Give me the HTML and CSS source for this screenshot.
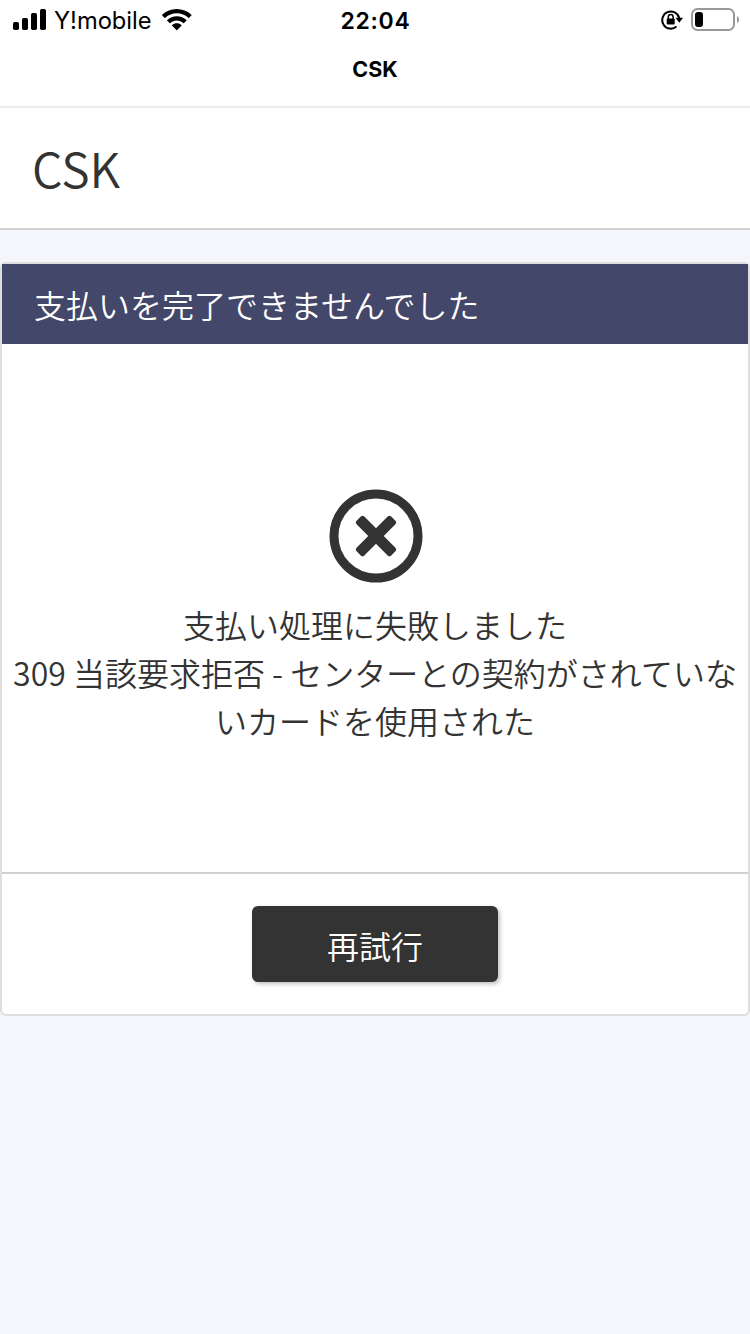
FILE: index.html
```html
<!DOCTYPE html>
<html lang="ja">
<head>
<meta charset="utf-8">
<title>CSK</title>
<link rel="stylesheet" href="styles.css">
</head>
<body>
<div class="status">
  <div class="status-left">
    <svg class="signal" width="34" height="22" viewBox="0 0 34 22"><rect x="0" y="13" width="6" height="8" rx="1.7"/><rect x="9" y="9" width="6" height="12" rx="1.7"/><rect x="18" y="4" width="6" height="17" rx="1.7"/><rect x="27" y="0" width="6" height="21" rx="1.7"/></svg>
    <span class="carrier">Y!mobile</span>
    <svg class="wifi" width="30" height="22" viewBox="0 0 30 22"><path d="M14.8 0C9.2 0 4 2.1.2 5.7q-.4.4 0 .8L2.500 8.700q.4.4.8 0C6.400 5.900 10.400 4.300 14.800 4.300s8.400 1.600 11.500 4.400q.4.4.8 0l2.300-2.200q.4-.4 0-.8C25.600 2.100 20.400 0 14.800 0z"/><path d="M14.800 7.200c-3.700 0-7.100 1.400-9.600 3.700q-.4.400 0 .8l2.400 2.300q.4.400.8 0c1.700-1.500 3.900-2.400 6.400-2.400s4.700.9 6.400 2.400q.4.400.8 0l2.400-2.300q.4-.4 0-.8c-2.500-2.300-5.900-3.700-9.600-3.700z"/><path d="M14.800 14.300c-1.800 0-3.400.6-4.600 1.700q-.4.400 0 .8l4.200 4.300q.4.400.8 0l4.200-4.300q.4-.4 0-.8c-1.200-1.100-2.800-1.700-4.600-1.700z"/></svg>
  </div>
  <div class="clock">22:04</div>
  <div class="status-right">
    <svg width="22" height="20" viewBox="0 0 22 20"><path d="M15.500 16.600A8.600 8.600 0 1 1 18.200 8" fill="none" stroke="#000" stroke-width="2"/><path d="M14.500 7.800H22L18.300 12.700z"/><rect x="5.700" y="8.500" width="8" height="6" rx="1"/><path d="M7.300 9V7a2.400 2.400 0 0 1 4.800 0v2" fill="none" stroke="#000" stroke-width="1.500"/></svg>
    <svg width="48" height="24" viewBox="0 0 48 24"><rect x="1" y="1" width="42" height="21" rx="5.500" fill="none" stroke="#999" stroke-width="2"/><rect x="4" y="4" width="8" height="15" rx="3"/><path d="M46 8q2.200 1.200 2.200 3.500T46 15z" fill="#999"/></svg>
  </div>
</div>
<div class="nav">CSK</div>
<header class="shop">CSK</header>
<main class="card">
  <h1 class="card-title">支払いを完了できませんでした</h1>
  <div class="message">
    <svg class="error-icon" width="94" height="94" viewBox="0 0 94 94"><circle cx="47" cy="47" r="42" fill="none" stroke="#333" stroke-width="9"/><g transform="rotate(45 47 47)" fill="#333"><rect x="22.500" y="41.500" width="49" height="11" rx="2.500"/><rect x="41.500" y="22.500" width="11" height="49" rx="2.500"/></g></svg>
    <p>支払い処理に失敗しました<br>309 当該要求拒否 - センターとの契約がされていないカードを使用された</p>
  </div>
  <div class="actions"><button class="retry">再試行</button></div>
</main>
</body>
</html>
```
FILE: styles.css
```css
* { box-sizing: border-box; }
body {
  margin: 0;
  min-height: 1334px;
  background: #f5f6fb;
  color: #333;
  font-family: "Noto Sans CJK JP", sans-serif;
  font-weight: 350;
}
svg { display: block; }
.status {
  display: grid;
  grid-template-columns: 1fr auto 1fr;
  align-items: center;
  height: 40px;
  padding: 0 11px 0 13px;
  background: #fff;
  color: #000;
  font-family: Inter, sans-serif;
  font-weight: 400;
}
.status-left { display: flex; align-items: center; }
.carrier { height: 40px; margin-left: 7px; padding-top: 1px; font-size: 23.7px; line-height: 40px; }
.wifi { margin-left: 10px; }
.clock { height: 40px; margin-right: 1px; padding-top: 1px; font-size: 23px; font-weight: 600; letter-spacing: 0.7px; line-height: 40px; }
.status-right { display: flex; align-items: center; justify-content: flex-end; gap: 8px; }
.nav {
  height: 68px;
  border-bottom: 2px solid #ececec;
  background: #fff;
  color: #000;
  font: 700 21.5px/59px Inter, sans-serif;
  text-align: center;
}
.shop {
  height: 122px;
  padding-left: 32px;
  border-bottom: 2px solid #d0d0d0;
  background: #fff;
  font-size: 48px;
  line-height: 119px;
}
.card {
  height: 754px;
  margin-top: 32px;
  border: 2px solid #dedede;
  border-radius: 6px;
  background: #fff;
}
.card-title {
  height: 80px;
  margin: 0;
  padding-left: 32px;
  background: #43476a;
  color: #fff;
  font-size: 32px;
  font-weight: 350;
  line-height: 80px;
}
.message {
  display: flex;
  flex-direction: column;
  align-items: center;
  height: 530px;
  padding: 145px 8px 0;
  border-bottom: 2px solid #d0d0d0;
}
.error-icon { margin-left: 2px; }
.message p {
  margin: 17px 0 0;
  font-size: 32px;
  line-height: 48px;
  text-align: center;
}
.actions { display: flex; justify-content: center; padding-top: 32px; }
.retry {
  width: 246px;
  height: 76px;
  padding: 1px 0 0;
  border: 0;
  border-radius: 6px;
  background: #333;
  box-shadow: 2px 2px 4px rgba(0, 0, 0, .25);
  color: #fff;
  font: 350 32px/48px "Noto Sans CJK JP", sans-serif;
}
```
